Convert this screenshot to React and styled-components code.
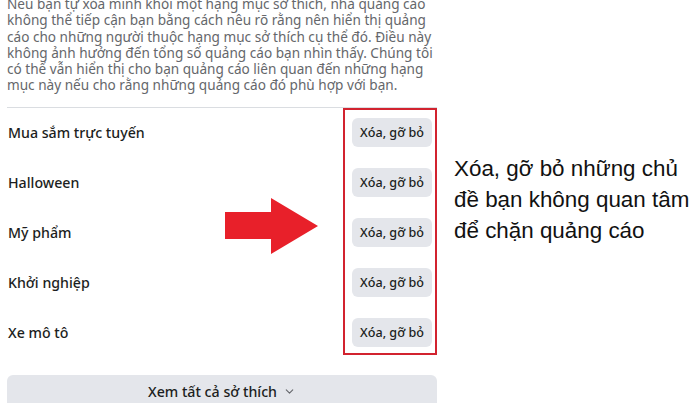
import React from "react";
import styled, { createGlobalStyle } from "styled-components";
import { ChevronDown } from "lucide-react";

const Global = createGlobalStyle`
  html, body {
    margin: 0;
    padding: 0;
    background: #ffffff;
    overflow: hidden;
  }
  body {
    width: 700px;
    height: 403px;
  }
`;

const Page = styled.div`
  display: flex;
  width: 700px;
  height: 403px;
  overflow: hidden;
  background: #fff;
`;

const LeftCol = styled.div`
  width: 430px;
  padding: 0 8px 0 7px;
  flex-shrink: 0;
  font-family: "Noto Sans", "Open Sans", sans-serif;
`;

const Intro = styled.p`
  margin: -4px 0 0 0;
  font-size: 13.6px;
  line-height: 16.3px;
  color: #65676b;
`;

const Divider = styled.div`
  height: 1px;
  background: #dadde1;
  margin-top: 13px;
`;

const ListWrap = styled.div`
  position: relative;
`;

const Row = styled.div`
  display: flex;
  align-items: center;
  justify-content: space-between;
  height: 50px;
  padding-left: 1px;
  padding-right: 5px;
`;

const RowLabel = styled.span`
  font-size: 14.2px;
  font-weight: 500;
  color: #1c1e21;
`;

const SmallButton = styled.button`
  width: 80px;
  height: 29px;
  border: none;
  border-radius: 6px;
  background: #e4e6eb;
  font-family: "Noto Sans", "Open Sans", sans-serif;
  font-size: 12.6px;
  font-weight: 500;
  color: #1c1e21;
  padding: 0;
  margin-top: ${(p) => p.offset || 0}px;
`;

const RedBox = styled.div`
  position: absolute;
  top: 0;
  right: 0;
  width: 94px;
  height: 247px;
  box-sizing: border-box;
  border: 2.5px solid #d2232f;
  pointer-events: none;
`;

const Arrow = styled.svg`
  position: absolute;
  left: 218px;
  top: 90px;
`;

const WideButton = styled.button`
  display: flex;
  align-items: center;
  justify-content: center;
  gap: 6px;
  width: 100%;
  height: 36px;
  margin-top: 17px;
  border: none;
  border-radius: 6px;
  background: #e4e6eb;
  font-family: "Noto Sans", "Open Sans", sans-serif;
  font-size: 14.2px;
  font-weight: 500;
  color: #1c1e21;
  padding: 0 0 2px 0;
`;

const RightCol = styled.div`
  flex: 1;
  padding: 153px 0 0 9px;
`;

const Caption = styled.p`
  margin: 0;
  font-family: "Liberation Sans", Arial, sans-serif;
  font-size: 22.4px;
  line-height: 31px;
  color: #111;
  white-space: nowrap;
`;

const topics = [
  "Mua sắm trực tuyến",
  "Halloween",
  "Mỹ phẩm",
  "Khởi nghiệp",
  "Xe mô tô",
];

export default function App() {
  return (
    <>
      <Global />
      <Page>
        <LeftCol>
          <Intro>
            Nếu bạn tự xóa mình khỏi một hạng mục sở thích, nhà quảng cáo
            không thể tiếp cận bạn bằng cách nêu rõ rằng nên hiển thị quảng
            cáo cho những người thuộc hạng mục sở thích cụ thể đó. Điều này
            không ảnh hưởng đến tổng số quảng cáo bạn nhìn thấy. Chúng tôi
            có thể vẫn hiển thị cho bạn quảng cáo liên quan đến những hạng
            mục này nếu cho rằng những quảng cáo đó phù hợp với bạn.
          </Intro>
          <Divider />
          <ListWrap>
            {topics.map((t) => (
              <Row key={t}>
                <RowLabel>{t}</RowLabel>
                <SmallButton offset={-1}>Xóa, gỡ bỏ</SmallButton>
              </Row>
            ))}
            <RedBox />
            <Arrow width="94" height="57" viewBox="0 0 94 57">
              <polygon
                points="0,14 46,14 46,0 93,28 46,56 46,41 0,41"
                fill="#e8202a"
              />
            </Arrow>
          </ListWrap>
          <WideButton>
            Xem tất cả sở thích
            <ChevronDown size={13} color="#65676b" strokeWidth={2} />
          </WideButton>
        </LeftCol>
        <RightCol>
          <Caption>Xóa, gỡ bỏ những chủ</Caption>
          <Caption>đề bạn không quan tâm</Caption>
          <Caption>để chặn quảng cáo</Caption>
        </RightCol>
      </Page>
    </>
  );
}
